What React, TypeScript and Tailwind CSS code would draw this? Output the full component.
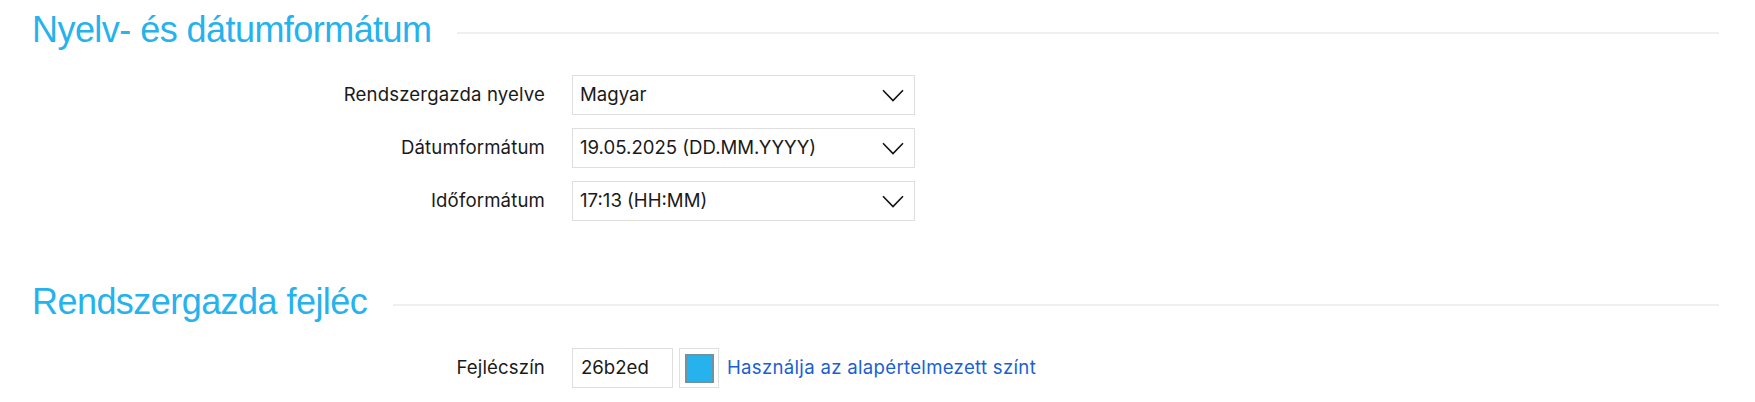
const SectionTitle = ({ title }: { title: string }) => (
  <div className="flex items-center">
    <h2 className="font-['Liberation_Sans',Arial,sans-serif] text-[36px] leading-[44px] tracking-[-0.55px] text-[#26b2ed] whitespace-nowrap">
      {title}
    </h2>
    <div className="flex-1 h-[2px] bg-[#efefef] ml-[26px] mt-[6px]" />
  </div>
)

const FakeSelect = ({ value }: { value: string }) => (
  <div className="w-[343px] h-[40px] border border-[#dedede] bg-white flex items-center justify-between pl-[7px] pr-[10px]">
    <span>{value}</span>
    <svg width="22" height="13" viewBox="0 0 22 13" fill="none" className="shrink-0">
      <path d="M1 1.2 L11 11.5 L21 1.2" stroke="#111" strokeWidth="1.6" />
    </svg>
  </div>
)

const Row = ({ label, children }: { label: string; children: React.ReactNode }) => (
  <div className="flex items-center h-[40px]">
    <div className="w-[513px] text-right tracking-[0.15px]">{label}</div>
    <div className="ml-[27px] flex items-center">{children}</div>
  </div>
)

export default function App() {
  const selects = [
    { label: "Rendszergazda nyelve", value: "Magyar" },
    { label: "Dátumformátum", value: "19.05.2025 (DD.MM.YYYY)" },
    { label: "Időformátum", value: "17:13 (HH:MM)" },
  ]

  return (
    <div className="w-[1755px] h-[402px] bg-white pl-[32px] pr-[36px] pt-[8px] font-['Inter',sans-serif] text-[18.6px] text-[#1a1a1a]">
      {/* Nyelv és dátum */}
      <SectionTitle title="Nyelv- és dátumformátum" />
      <div className="mt-[23px] flex flex-col gap-[13px]">
        {selects.map((s) => (
          <Row key={s.label} label={s.label}>
            <FakeSelect value={s.value} />
          </Row>
        ))}
      </div>

      {/* Fejléc */}
      <div className="mt-[59px]">
        <SectionTitle title="Rendszergazda fejléc" />
      </div>
      <div className="mt-[24px]">
        <Row label="Fejlécszín">
          <div className="w-[101px] h-[40px] border border-[#dedede] flex items-center pl-[8px]">26b2ed</div>
          <div className="ml-[6px] w-[40px] h-[40px] border border-[#e0e0e0] flex items-center justify-center">
            <div className="w-[29px] h-[29px] bg-[#26b2ed] border-2 border-[#7292a0]" />
          </div>
          <a href="#" className="ml-[8px] text-[#1b5fd3] tracking-[0.3px] whitespace-nowrap">
            Használja az alapértelmezett színt
          </a>
        </Row>
      </div>
    </div>
  )
}
